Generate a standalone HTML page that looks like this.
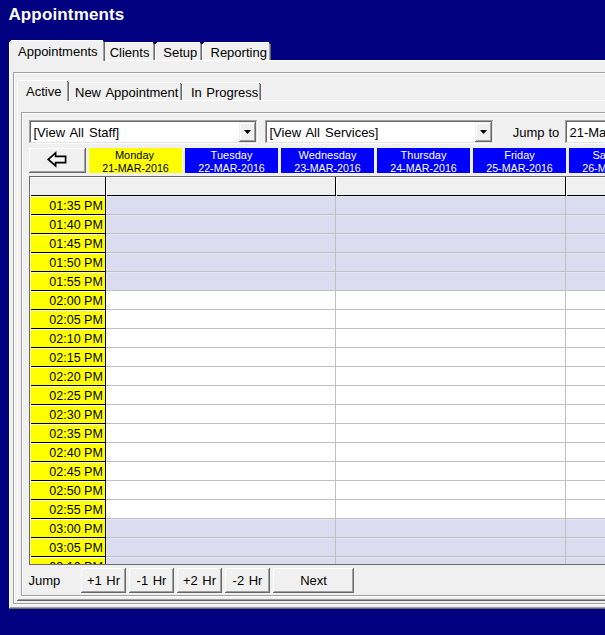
<!DOCTYPE html>
<html><head><meta charset="utf-8"><style>
html,body{margin:0;padding:0;}
body{width:605px;height:635px;overflow:hidden;background:#000080;position:relative;font-family:"Liberation Sans",sans-serif;}
div{position:absolute;}
.t{position:absolute;line-height:1;white-space:pre;}
</style></head><body>
<span class="t" style="left:8.4px;top:5.51px;font-size:17px;color:#fff;font-weight:bold;letter-spacing:0.15px">Appointments</span>
<div style="left:9px;top:60px;width:700px;height:549px;background:#f0f0f0;"></div>
<div style="left:9px;top:60px;width:1px;height:548px;background:#ffffff;"></div>
<div style="left:9px;top:60px;width:596px;height:1px;background:#ffffff;"></div>
<div style="left:10px;top:607px;width:595px;height:1px;background:#a0a0a0;"></div>
<div style="left:9px;top:608px;width:596px;height:1px;background:#696969;"></div>
<div style="left:103px;top:44px;width:52px;height:16px;background:#f0f0f0;"></div>
<div style="left:104px;top:43px;width:50px;height:1px;background:#f0f0f0;"></div>
<div style="left:105px;top:42px;width:48px;height:1px;background:#ffffff;"></div>
<div style="left:104px;top:43px;width:1px;height:1px;background:#ffffff;"></div>
<div style="left:103px;top:44px;width:1px;height:16px;background:#ffffff;"></div>
<div style="left:153px;top:43px;width:1px;height:1px;background:#696969;"></div>
<div style="left:153px;top:44px;width:1px;height:16px;background:#a0a0a0;"></div>
<div style="left:154px;top:44px;width:1px;height:16px;background:#696969;"></div>
<div style="left:155px;top:44px;width:47px;height:16px;background:#f0f0f0;"></div>
<div style="left:156px;top:43px;width:45px;height:1px;background:#f0f0f0;"></div>
<div style="left:157px;top:42px;width:43px;height:1px;background:#ffffff;"></div>
<div style="left:156px;top:43px;width:1px;height:1px;background:#ffffff;"></div>
<div style="left:155px;top:44px;width:1px;height:16px;background:#ffffff;"></div>
<div style="left:200px;top:43px;width:1px;height:1px;background:#696969;"></div>
<div style="left:200px;top:44px;width:1px;height:16px;background:#a0a0a0;"></div>
<div style="left:201px;top:44px;width:1px;height:16px;background:#696969;"></div>
<div style="left:202px;top:44px;width:69px;height:16px;background:#f0f0f0;"></div>
<div style="left:203px;top:43px;width:67px;height:1px;background:#f0f0f0;"></div>
<div style="left:204px;top:42px;width:65px;height:1px;background:#ffffff;"></div>
<div style="left:203px;top:43px;width:1px;height:1px;background:#ffffff;"></div>
<div style="left:202px;top:44px;width:1px;height:16px;background:#ffffff;"></div>
<div style="left:269px;top:43px;width:1px;height:1px;background:#696969;"></div>
<div style="left:269px;top:44px;width:1px;height:16px;background:#a0a0a0;"></div>
<div style="left:270px;top:44px;width:1px;height:16px;background:#696969;"></div>
<div style="left:9px;top:42px;width:96px;height:19px;background:#f0f0f0;"></div>
<div style="left:10px;top:41px;width:94px;height:1px;background:#f0f0f0;"></div>
<div style="left:11px;top:40px;width:92px;height:1px;background:#ffffff;"></div>
<div style="left:10px;top:41px;width:1px;height:1px;background:#ffffff;"></div>
<div style="left:9px;top:42px;width:1px;height:19px;background:#ffffff;"></div>
<div style="left:103px;top:41px;width:1px;height:1px;background:#696969;"></div>
<div style="left:103px;top:42px;width:1px;height:19px;background:#a0a0a0;"></div>
<div style="left:104px;top:42px;width:1px;height:19px;background:#696969;"></div>
<div style="left:10px;top:60px;width:93px;height:1px;background:#f0f0f0;"></div>
<span class="t" style="left:18px;top:44.60px;font-size:13px;color:#000;">Appointments</span>
<span class="t" style="left:109.7px;top:45.60px;font-size:13px;color:#000;">Clients</span>
<span class="t" style="left:163.3px;top:45.60px;font-size:13px;color:#000;">Setup</span>
<span class="t" style="left:210.5px;top:45.60px;font-size:13px;color:#000;">Reporting</span>
<div style="left:13px;top:72px;width:592px;height:1px;background:#a0a0a0;"></div>
<div style="left:13px;top:72px;width:1px;height:532px;background:#a0a0a0;"></div>
<div style="left:14px;top:73px;width:591px;height:1px;background:#ffffff;"></div>
<div style="left:14px;top:73px;width:1px;height:530px;background:#ffffff;"></div>
<div style="left:14px;top:603px;width:591px;height:1px;background:#a0a0a0;"></div>
<div style="left:13px;top:604px;width:592px;height:1px;background:#ffffff;"></div>
<div style="left:17px;top:100px;width:1px;height:500px;background:#ffffff;"></div>
<div style="left:17px;top:100px;width:588px;height:1px;background:#ffffff;"></div>
<div style="left:18px;top:599px;width:587px;height:1px;background:#a0a0a0;"></div>
<div style="left:17px;top:600px;width:588px;height:1px;background:#696969;"></div>
<div style="left:69px;top:84px;width:113px;height:16px;background:#f0f0f0;"></div>
<div style="left:70px;top:83px;width:111px;height:1px;background:#f0f0f0;"></div>
<div style="left:71px;top:82px;width:109px;height:1px;background:#ffffff;"></div>
<div style="left:70px;top:83px;width:1px;height:1px;background:#ffffff;"></div>
<div style="left:69px;top:84px;width:1px;height:16px;background:#ffffff;"></div>
<div style="left:180px;top:83px;width:1px;height:1px;background:#696969;"></div>
<div style="left:180px;top:84px;width:1px;height:16px;background:#a0a0a0;"></div>
<div style="left:181px;top:84px;width:1px;height:16px;background:#696969;"></div>
<div style="left:182px;top:84px;width:79px;height:16px;background:#f0f0f0;"></div>
<div style="left:183px;top:83px;width:77px;height:1px;background:#f0f0f0;"></div>
<div style="left:184px;top:82px;width:75px;height:1px;background:#ffffff;"></div>
<div style="left:183px;top:83px;width:1px;height:1px;background:#ffffff;"></div>
<div style="left:182px;top:84px;width:1px;height:16px;background:#ffffff;"></div>
<div style="left:259px;top:83px;width:1px;height:1px;background:#696969;"></div>
<div style="left:259px;top:84px;width:1px;height:16px;background:#a0a0a0;"></div>
<div style="left:260px;top:84px;width:1px;height:16px;background:#696969;"></div>
<div style="left:17px;top:82px;width:52px;height:19px;background:#f0f0f0;"></div>
<div style="left:18px;top:81px;width:50px;height:1px;background:#f0f0f0;"></div>
<div style="left:19px;top:80px;width:48px;height:1px;background:#ffffff;"></div>
<div style="left:18px;top:81px;width:1px;height:1px;background:#ffffff;"></div>
<div style="left:17px;top:82px;width:1px;height:19px;background:#ffffff;"></div>
<div style="left:67px;top:81px;width:1px;height:1px;background:#696969;"></div>
<div style="left:67px;top:82px;width:1px;height:19px;background:#a0a0a0;"></div>
<div style="left:68px;top:82px;width:1px;height:19px;background:#696969;"></div>
<div style="left:18px;top:100px;width:49px;height:1px;background:#f0f0f0;"></div>
<span class="t" style="left:26px;top:84.60px;font-size:13px;color:#000;">Active</span>
<span class="t" style="left:75.0px;top:85.60px;font-size:13px;color:#000;word-spacing:1.5px">New Appointment</span>
<span class="t" style="left:191.0px;top:85.60px;font-size:13px;color:#000;word-spacing:0.8px">In Progress</span>
<div style="left:21px;top:112px;width:584px;height:1px;background:#a0a0a0;"></div>
<div style="left:21px;top:112px;width:1px;height:484px;background:#a0a0a0;"></div>
<div style="left:22px;top:113px;width:583px;height:1px;background:#ffffff;"></div>
<div style="left:22px;top:113px;width:1px;height:482px;background:#ffffff;"></div>
<div style="left:22px;top:595px;width:583px;height:1px;background:#a0a0a0;"></div>
<div style="left:21px;top:596px;width:584px;height:1px;background:#ffffff;"></div>
<div style="left:29px;top:120px;width:229px;height:24px;background:#ffffff;"></div>
<div style="left:29px;top:120px;width:228px;height:1px;background:#a0a0a0;"></div>
<div style="left:29px;top:120px;width:1px;height:23px;background:#a0a0a0;"></div>
<div style="left:30px;top:121px;width:226px;height:1px;background:#696969;"></div>
<div style="left:30px;top:121px;width:1px;height:21px;background:#696969;"></div>
<div style="left:30px;top:142px;width:227px;height:1px;background:#e3e3e3;"></div>
<div style="left:256px;top:121px;width:1px;height:22px;background:#e3e3e3;"></div>
<div style="left:29px;top:143px;width:229px;height:1px;background:#ffffff;"></div>
<div style="left:257px;top:120px;width:1px;height:24px;background:#ffffff;"></div>
<div style="left:239px;top:122px;width:17px;height:20px;background:#f0f0f0;"></div>
<div style="left:239px;top:122px;width:16px;height:1px;background:#f0f0f0;"></div>
<div style="left:239px;top:122px;width:1px;height:19px;background:#f0f0f0;"></div>
<div style="left:240px;top:123px;width:14px;height:1px;background:#ffffff;"></div>
<div style="left:240px;top:123px;width:1px;height:17px;background:#ffffff;"></div>
<div style="left:240px;top:140px;width:15px;height:1px;background:#a0a0a0;"></div>
<div style="left:254px;top:123px;width:1px;height:18px;background:#a0a0a0;"></div>
<div style="left:239px;top:141px;width:17px;height:1px;background:#696969;"></div>
<div style="left:255px;top:122px;width:1px;height:20px;background:#696969;"></div>
<svg style="position:absolute;left:244px;top:130px" width="7" height="4"><path d="M0 0H7L3.5 4Z" fill="#000"/></svg>
<span class="t" style="left:33.5px;top:125.80px;font-size:13px;color:#000;word-spacing:1.5px">[View All Staff]</span>
<div style="left:265px;top:120px;width:229px;height:24px;background:#ffffff;"></div>
<div style="left:265px;top:120px;width:228px;height:1px;background:#a0a0a0;"></div>
<div style="left:265px;top:120px;width:1px;height:23px;background:#a0a0a0;"></div>
<div style="left:266px;top:121px;width:226px;height:1px;background:#696969;"></div>
<div style="left:266px;top:121px;width:1px;height:21px;background:#696969;"></div>
<div style="left:266px;top:142px;width:227px;height:1px;background:#e3e3e3;"></div>
<div style="left:492px;top:121px;width:1px;height:22px;background:#e3e3e3;"></div>
<div style="left:265px;top:143px;width:229px;height:1px;background:#ffffff;"></div>
<div style="left:493px;top:120px;width:1px;height:24px;background:#ffffff;"></div>
<div style="left:475px;top:122px;width:17px;height:20px;background:#f0f0f0;"></div>
<div style="left:475px;top:122px;width:16px;height:1px;background:#f0f0f0;"></div>
<div style="left:475px;top:122px;width:1px;height:19px;background:#f0f0f0;"></div>
<div style="left:476px;top:123px;width:14px;height:1px;background:#ffffff;"></div>
<div style="left:476px;top:123px;width:1px;height:17px;background:#ffffff;"></div>
<div style="left:476px;top:140px;width:15px;height:1px;background:#a0a0a0;"></div>
<div style="left:490px;top:123px;width:1px;height:18px;background:#a0a0a0;"></div>
<div style="left:475px;top:141px;width:17px;height:1px;background:#696969;"></div>
<div style="left:491px;top:122px;width:1px;height:20px;background:#696969;"></div>
<svg style="position:absolute;left:480px;top:130px" width="7" height="4"><path d="M0 0H7L3.5 4Z" fill="#000"/></svg>
<span class="t" style="left:269.5px;top:125.80px;font-size:13px;color:#000;word-spacing:1.5px">[View All Services]</span>
<span class="t" style="left:512.8px;top:125.50px;font-size:13px;color:#000;word-spacing:0.3px">Jump to</span>
<div style="left:565px;top:120px;width:136px;height:24px;background:#ffffff;"></div>
<div style="left:565px;top:120px;width:135px;height:1px;background:#a0a0a0;"></div>
<div style="left:565px;top:120px;width:1px;height:23px;background:#a0a0a0;"></div>
<div style="left:566px;top:121px;width:133px;height:1px;background:#696969;"></div>
<div style="left:566px;top:121px;width:1px;height:21px;background:#696969;"></div>
<div style="left:566px;top:142px;width:134px;height:1px;background:#e3e3e3;"></div>
<div style="left:699px;top:121px;width:1px;height:22px;background:#e3e3e3;"></div>
<div style="left:565px;top:143px;width:136px;height:1px;background:#ffffff;"></div>
<div style="left:700px;top:120px;width:1px;height:24px;background:#ffffff;"></div>
<span class="t" style="left:569.5px;top:125.80px;font-size:13px;color:#000;">21-Mar-2016</span>
<div style="left:29px;top:148px;width:57px;height:25px;background:#f0f0f0;"></div>
<div style="left:29px;top:148px;width:56px;height:1px;background:#ffffff;"></div>
<div style="left:29px;top:148px;width:1px;height:24px;background:#ffffff;"></div>
<div style="left:30px;top:149px;width:54px;height:1px;background:#f0f0f0;"></div>
<div style="left:30px;top:149px;width:1px;height:22px;background:#f0f0f0;"></div>
<div style="left:30px;top:171px;width:55px;height:1px;background:#a0a0a0;"></div>
<div style="left:84px;top:149px;width:1px;height:23px;background:#a0a0a0;"></div>
<div style="left:29px;top:172px;width:57px;height:1px;background:#696969;"></div>
<div style="left:85px;top:148px;width:1px;height:25px;background:#696969;"></div>
<svg style="position:absolute;left:44px;top:148px" width="26" height="24"><path d="M4.3 11.4L11.6 4.9V8.3H21.6V14.6H11.6V17.9Z" fill="#f4f4f4" stroke="#000" stroke-width="1.7" stroke-linejoin="miter"/></svg>
<div style="left:89px;top:148px;width:93px;height:25px;background:#ffff00;"></div>
<span class="t" style="left:34.50px;width:200px;text-align:center;top:149.59px;font-size:11px;color:#000;">Monday</span>
<span class="t" style="left:35.50px;width:200px;text-align:center;top:163.34px;font-size:10.7px;color:#000;">21-MAR-2016</span>
<div style="left:185px;top:148px;width:93px;height:25px;background:#0000ff;"></div>
<span class="t" style="left:131.50px;width:200px;text-align:center;top:149.59px;font-size:11px;color:#fff;">Tuesday</span>
<span class="t" style="left:131.50px;width:200px;text-align:center;top:163.34px;font-size:10.7px;color:#fff;">22-MAR-2016</span>
<div style="left:281px;top:148px;width:93px;height:25px;background:#0000ff;"></div>
<span class="t" style="left:227.50px;width:200px;text-align:center;top:149.59px;font-size:11px;color:#fff;">Wednesday</span>
<span class="t" style="left:227.50px;width:200px;text-align:center;top:163.34px;font-size:10.7px;color:#fff;">23-MAR-2016</span>
<div style="left:377px;top:148px;width:93px;height:25px;background:#0000ff;"></div>
<span class="t" style="left:323.50px;width:200px;text-align:center;top:149.59px;font-size:11px;color:#fff;">Thursday</span>
<span class="t" style="left:323.50px;width:200px;text-align:center;top:163.34px;font-size:10.7px;color:#fff;">24-MAR-2016</span>
<div style="left:473px;top:148px;width:93px;height:25px;background:#0000ff;"></div>
<span class="t" style="left:419.50px;width:200px;text-align:center;top:149.59px;font-size:11px;color:#fff;">Friday</span>
<span class="t" style="left:419.50px;width:200px;text-align:center;top:163.34px;font-size:10.7px;color:#fff;">25-MAR-2016</span>
<div style="left:569px;top:148px;width:93px;height:25px;background:#0000ff;"></div>
<span class="t" style="left:514.50px;width:200px;text-align:center;top:149.59px;font-size:11px;color:#fff;">Saturday</span>
<span class="t" style="left:515.50px;width:200px;text-align:center;top:163.34px;font-size:10.7px;color:#fff;">26-MAR-2016</span>
<div style="left:29px;top:176px;width:700px;height:389px;background:#ffffff;"></div>
<div style="left:29px;top:176px;width:1px;height:389px;background:#696969;"></div>
<div style="left:29px;top:176px;width:576px;height:1px;background:#696969;"></div>
<div style="left:29px;top:564px;width:576px;height:1px;background:#696969;"></div>
<div style="left:30px;top:177px;width:600px;height:387px;overflow:hidden">
<div style="left:0px;top:0px;width:700px;height:18px;background:#f0f0f0;"></div>
<div style="left:0px;top:0px;width:575px;height:1px;background:#ffffff;"></div>
<div style="left:0px;top:0px;width:1px;height:18px;background:#ffffff;"></div>
<div style="left:75px;top:0px;width:1px;height:387px;background:#000;"></div>
<div style="left:1px;top:18px;width:74px;height:1px;background:#000;"></div>
<div style="left:0px;top:18px;width:1px;height:1px;background:#ffffff;"></div>
<div style="left:76px;top:1px;width:1px;height:18px;background:#ffffff;"></div>
<div style="left:305px;top:0px;width:1px;height:19px;background:#000;"></div>
<div style="left:77px;top:18px;width:229px;height:1px;background:#000;"></div>
<div style="left:306px;top:1px;width:1px;height:18px;background:#ffffff;"></div>
<div style="left:535px;top:0px;width:1px;height:19px;background:#000;"></div>
<div style="left:307px;top:18px;width:229px;height:1px;background:#000;"></div>
<div style="left:536px;top:1px;width:1px;height:18px;background:#ffffff;"></div>
<div style="left:537px;top:18px;width:38px;height:1px;background:#000;"></div>
<div style="left:0px;top:19px;width:75px;height:18px;background:#ffff00;"></div>
<div style="left:1px;top:19px;width:74px;height:1px;background:#ffffff;"></div>
<div style="left:0px;top:19px;width:1px;height:18px;background:#ffffa0;"></div>
<div style="left:1px;top:37px;width:74px;height:1px;background:#000;"></div>
<div style="left:0px;top:37px;width:1px;height:1px;background:#ffffff;"></div>
<div style="left:76px;top:19px;width:700px;height:18px;background:#dcdcf0;"></div>
<div style="left:76px;top:19px;width:499px;height:1px;background:#e6e6f6;"></div>
<div style="left:76px;top:19px;width:1px;height:18px;background:#e6e6f6;"></div>
<div style="left:76px;top:37px;width:499px;height:1px;background:#c0c0c0;"></div>
<span class="t" style="left:-127.20px;width:200px;text-align:right;top:23.42px;font-size:12.5px">01:35 PM</span>
<div style="left:0px;top:38px;width:75px;height:18px;background:#ffff00;"></div>
<div style="left:1px;top:38px;width:74px;height:1px;background:#ffffff;"></div>
<div style="left:0px;top:38px;width:1px;height:18px;background:#ffffa0;"></div>
<div style="left:1px;top:56px;width:74px;height:1px;background:#000;"></div>
<div style="left:0px;top:56px;width:1px;height:1px;background:#ffffff;"></div>
<div style="left:76px;top:38px;width:700px;height:18px;background:#dcdcf0;"></div>
<div style="left:76px;top:38px;width:499px;height:1px;background:#e6e6f6;"></div>
<div style="left:76px;top:38px;width:1px;height:18px;background:#e6e6f6;"></div>
<div style="left:76px;top:56px;width:499px;height:1px;background:#c0c0c0;"></div>
<span class="t" style="left:-127.20px;width:200px;text-align:right;top:42.42px;font-size:12.5px">01:40 PM</span>
<div style="left:0px;top:57px;width:75px;height:18px;background:#ffff00;"></div>
<div style="left:1px;top:57px;width:74px;height:1px;background:#ffffff;"></div>
<div style="left:0px;top:57px;width:1px;height:18px;background:#ffffa0;"></div>
<div style="left:1px;top:75px;width:74px;height:1px;background:#000;"></div>
<div style="left:0px;top:75px;width:1px;height:1px;background:#ffffff;"></div>
<div style="left:76px;top:57px;width:700px;height:18px;background:#dcdcf0;"></div>
<div style="left:76px;top:57px;width:499px;height:1px;background:#e6e6f6;"></div>
<div style="left:76px;top:57px;width:1px;height:18px;background:#e6e6f6;"></div>
<div style="left:76px;top:75px;width:499px;height:1px;background:#c0c0c0;"></div>
<span class="t" style="left:-127.20px;width:200px;text-align:right;top:61.42px;font-size:12.5px">01:45 PM</span>
<div style="left:0px;top:76px;width:75px;height:18px;background:#ffff00;"></div>
<div style="left:1px;top:76px;width:74px;height:1px;background:#ffffff;"></div>
<div style="left:0px;top:76px;width:1px;height:18px;background:#ffffa0;"></div>
<div style="left:1px;top:94px;width:74px;height:1px;background:#000;"></div>
<div style="left:0px;top:94px;width:1px;height:1px;background:#ffffff;"></div>
<div style="left:76px;top:76px;width:700px;height:18px;background:#dcdcf0;"></div>
<div style="left:76px;top:76px;width:499px;height:1px;background:#e6e6f6;"></div>
<div style="left:76px;top:76px;width:1px;height:18px;background:#e6e6f6;"></div>
<div style="left:76px;top:94px;width:499px;height:1px;background:#c0c0c0;"></div>
<span class="t" style="left:-127.20px;width:200px;text-align:right;top:80.42px;font-size:12.5px">01:50 PM</span>
<div style="left:0px;top:95px;width:75px;height:18px;background:#ffff00;"></div>
<div style="left:1px;top:95px;width:74px;height:1px;background:#ffffff;"></div>
<div style="left:0px;top:95px;width:1px;height:18px;background:#ffffa0;"></div>
<div style="left:1px;top:113px;width:74px;height:1px;background:#000;"></div>
<div style="left:0px;top:113px;width:1px;height:1px;background:#ffffff;"></div>
<div style="left:76px;top:95px;width:700px;height:18px;background:#dcdcf0;"></div>
<div style="left:76px;top:95px;width:499px;height:1px;background:#e6e6f6;"></div>
<div style="left:76px;top:95px;width:1px;height:18px;background:#e6e6f6;"></div>
<div style="left:76px;top:113px;width:499px;height:1px;background:#c0c0c0;"></div>
<span class="t" style="left:-127.20px;width:200px;text-align:right;top:99.42px;font-size:12.5px">01:55 PM</span>
<div style="left:0px;top:114px;width:75px;height:18px;background:#ffff00;"></div>
<div style="left:1px;top:114px;width:74px;height:1px;background:#ffffff;"></div>
<div style="left:0px;top:114px;width:1px;height:18px;background:#ffffa0;"></div>
<div style="left:1px;top:132px;width:74px;height:1px;background:#000;"></div>
<div style="left:0px;top:132px;width:1px;height:1px;background:#ffffff;"></div>
<div style="left:76px;top:114px;width:700px;height:18px;background:#ffffff;"></div>
<div style="left:76px;top:132px;width:499px;height:1px;background:#c0c0c0;"></div>
<span class="t" style="left:-127.20px;width:200px;text-align:right;top:118.42px;font-size:12.5px">02:00 PM</span>
<div style="left:0px;top:133px;width:75px;height:18px;background:#ffff00;"></div>
<div style="left:1px;top:133px;width:74px;height:1px;background:#ffffff;"></div>
<div style="left:0px;top:133px;width:1px;height:18px;background:#ffffa0;"></div>
<div style="left:1px;top:151px;width:74px;height:1px;background:#000;"></div>
<div style="left:0px;top:151px;width:1px;height:1px;background:#ffffff;"></div>
<div style="left:76px;top:133px;width:700px;height:18px;background:#ffffff;"></div>
<div style="left:76px;top:151px;width:499px;height:1px;background:#c0c0c0;"></div>
<span class="t" style="left:-127.20px;width:200px;text-align:right;top:137.42px;font-size:12.5px">02:05 PM</span>
<div style="left:0px;top:152px;width:75px;height:18px;background:#ffff00;"></div>
<div style="left:1px;top:152px;width:74px;height:1px;background:#ffffff;"></div>
<div style="left:0px;top:152px;width:1px;height:18px;background:#ffffa0;"></div>
<div style="left:1px;top:170px;width:74px;height:1px;background:#000;"></div>
<div style="left:0px;top:170px;width:1px;height:1px;background:#ffffff;"></div>
<div style="left:76px;top:152px;width:700px;height:18px;background:#ffffff;"></div>
<div style="left:76px;top:170px;width:499px;height:1px;background:#c0c0c0;"></div>
<span class="t" style="left:-127.20px;width:200px;text-align:right;top:156.42px;font-size:12.5px">02:10 PM</span>
<div style="left:0px;top:171px;width:75px;height:18px;background:#ffff00;"></div>
<div style="left:1px;top:171px;width:74px;height:1px;background:#ffffff;"></div>
<div style="left:0px;top:171px;width:1px;height:18px;background:#ffffa0;"></div>
<div style="left:1px;top:189px;width:74px;height:1px;background:#000;"></div>
<div style="left:0px;top:189px;width:1px;height:1px;background:#ffffff;"></div>
<div style="left:76px;top:171px;width:700px;height:18px;background:#ffffff;"></div>
<div style="left:76px;top:189px;width:499px;height:1px;background:#c0c0c0;"></div>
<span class="t" style="left:-127.20px;width:200px;text-align:right;top:175.42px;font-size:12.5px">02:15 PM</span>
<div style="left:0px;top:190px;width:75px;height:18px;background:#ffff00;"></div>
<div style="left:1px;top:190px;width:74px;height:1px;background:#ffffff;"></div>
<div style="left:0px;top:190px;width:1px;height:18px;background:#ffffa0;"></div>
<div style="left:1px;top:208px;width:74px;height:1px;background:#000;"></div>
<div style="left:0px;top:208px;width:1px;height:1px;background:#ffffff;"></div>
<div style="left:76px;top:190px;width:700px;height:18px;background:#ffffff;"></div>
<div style="left:76px;top:208px;width:499px;height:1px;background:#c0c0c0;"></div>
<span class="t" style="left:-127.20px;width:200px;text-align:right;top:194.42px;font-size:12.5px">02:20 PM</span>
<div style="left:0px;top:209px;width:75px;height:18px;background:#ffff00;"></div>
<div style="left:1px;top:209px;width:74px;height:1px;background:#ffffff;"></div>
<div style="left:0px;top:209px;width:1px;height:18px;background:#ffffa0;"></div>
<div style="left:1px;top:227px;width:74px;height:1px;background:#000;"></div>
<div style="left:0px;top:227px;width:1px;height:1px;background:#ffffff;"></div>
<div style="left:76px;top:209px;width:700px;height:18px;background:#ffffff;"></div>
<div style="left:76px;top:227px;width:499px;height:1px;background:#c0c0c0;"></div>
<span class="t" style="left:-127.20px;width:200px;text-align:right;top:213.42px;font-size:12.5px">02:25 PM</span>
<div style="left:0px;top:228px;width:75px;height:18px;background:#ffff00;"></div>
<div style="left:1px;top:228px;width:74px;height:1px;background:#ffffff;"></div>
<div style="left:0px;top:228px;width:1px;height:18px;background:#ffffa0;"></div>
<div style="left:1px;top:246px;width:74px;height:1px;background:#000;"></div>
<div style="left:0px;top:246px;width:1px;height:1px;background:#ffffff;"></div>
<div style="left:76px;top:228px;width:700px;height:18px;background:#ffffff;"></div>
<div style="left:76px;top:246px;width:499px;height:1px;background:#c0c0c0;"></div>
<span class="t" style="left:-127.20px;width:200px;text-align:right;top:232.42px;font-size:12.5px">02:30 PM</span>
<div style="left:0px;top:247px;width:75px;height:18px;background:#ffff00;"></div>
<div style="left:1px;top:247px;width:74px;height:1px;background:#ffffff;"></div>
<div style="left:0px;top:247px;width:1px;height:18px;background:#ffffa0;"></div>
<div style="left:1px;top:265px;width:74px;height:1px;background:#000;"></div>
<div style="left:0px;top:265px;width:1px;height:1px;background:#ffffff;"></div>
<div style="left:76px;top:247px;width:700px;height:18px;background:#ffffff;"></div>
<div style="left:76px;top:265px;width:499px;height:1px;background:#c0c0c0;"></div>
<span class="t" style="left:-127.20px;width:200px;text-align:right;top:251.42px;font-size:12.5px">02:35 PM</span>
<div style="left:0px;top:266px;width:75px;height:18px;background:#ffff00;"></div>
<div style="left:1px;top:266px;width:74px;height:1px;background:#ffffff;"></div>
<div style="left:0px;top:266px;width:1px;height:18px;background:#ffffa0;"></div>
<div style="left:1px;top:284px;width:74px;height:1px;background:#000;"></div>
<div style="left:0px;top:284px;width:1px;height:1px;background:#ffffff;"></div>
<div style="left:76px;top:266px;width:700px;height:18px;background:#ffffff;"></div>
<div style="left:76px;top:284px;width:499px;height:1px;background:#c0c0c0;"></div>
<span class="t" style="left:-127.20px;width:200px;text-align:right;top:270.42px;font-size:12.5px">02:40 PM</span>
<div style="left:0px;top:285px;width:75px;height:18px;background:#ffff00;"></div>
<div style="left:1px;top:285px;width:74px;height:1px;background:#ffffff;"></div>
<div style="left:0px;top:285px;width:1px;height:18px;background:#ffffa0;"></div>
<div style="left:1px;top:303px;width:74px;height:1px;background:#000;"></div>
<div style="left:0px;top:303px;width:1px;height:1px;background:#ffffff;"></div>
<div style="left:76px;top:285px;width:700px;height:18px;background:#ffffff;"></div>
<div style="left:76px;top:303px;width:499px;height:1px;background:#c0c0c0;"></div>
<span class="t" style="left:-127.20px;width:200px;text-align:right;top:289.42px;font-size:12.5px">02:45 PM</span>
<div style="left:0px;top:304px;width:75px;height:18px;background:#ffff00;"></div>
<div style="left:1px;top:304px;width:74px;height:1px;background:#ffffff;"></div>
<div style="left:0px;top:304px;width:1px;height:18px;background:#ffffa0;"></div>
<div style="left:1px;top:322px;width:74px;height:1px;background:#000;"></div>
<div style="left:0px;top:322px;width:1px;height:1px;background:#ffffff;"></div>
<div style="left:76px;top:304px;width:700px;height:18px;background:#ffffff;"></div>
<div style="left:76px;top:322px;width:499px;height:1px;background:#c0c0c0;"></div>
<span class="t" style="left:-127.20px;width:200px;text-align:right;top:308.42px;font-size:12.5px">02:50 PM</span>
<div style="left:0px;top:323px;width:75px;height:18px;background:#ffff00;"></div>
<div style="left:1px;top:323px;width:74px;height:1px;background:#ffffff;"></div>
<div style="left:0px;top:323px;width:1px;height:18px;background:#ffffa0;"></div>
<div style="left:1px;top:341px;width:74px;height:1px;background:#000;"></div>
<div style="left:0px;top:341px;width:1px;height:1px;background:#ffffff;"></div>
<div style="left:76px;top:323px;width:700px;height:18px;background:#ffffff;"></div>
<div style="left:76px;top:341px;width:499px;height:1px;background:#c0c0c0;"></div>
<span class="t" style="left:-127.20px;width:200px;text-align:right;top:327.42px;font-size:12.5px">02:55 PM</span>
<div style="left:0px;top:342px;width:75px;height:18px;background:#ffff00;"></div>
<div style="left:1px;top:342px;width:74px;height:1px;background:#ffffff;"></div>
<div style="left:0px;top:342px;width:1px;height:18px;background:#ffffa0;"></div>
<div style="left:1px;top:360px;width:74px;height:1px;background:#000;"></div>
<div style="left:0px;top:360px;width:1px;height:1px;background:#ffffff;"></div>
<div style="left:76px;top:342px;width:700px;height:18px;background:#dcdcf0;"></div>
<div style="left:76px;top:342px;width:499px;height:1px;background:#e6e6f6;"></div>
<div style="left:76px;top:342px;width:1px;height:18px;background:#e6e6f6;"></div>
<div style="left:76px;top:360px;width:499px;height:1px;background:#c0c0c0;"></div>
<span class="t" style="left:-127.20px;width:200px;text-align:right;top:346.42px;font-size:12.5px">03:00 PM</span>
<div style="left:0px;top:361px;width:75px;height:18px;background:#ffff00;"></div>
<div style="left:1px;top:361px;width:74px;height:1px;background:#ffffff;"></div>
<div style="left:0px;top:361px;width:1px;height:18px;background:#ffffa0;"></div>
<div style="left:1px;top:379px;width:74px;height:1px;background:#000;"></div>
<div style="left:0px;top:379px;width:1px;height:1px;background:#ffffff;"></div>
<div style="left:76px;top:361px;width:700px;height:18px;background:#dcdcf0;"></div>
<div style="left:76px;top:361px;width:499px;height:1px;background:#e6e6f6;"></div>
<div style="left:76px;top:361px;width:1px;height:18px;background:#e6e6f6;"></div>
<div style="left:76px;top:379px;width:499px;height:1px;background:#c0c0c0;"></div>
<span class="t" style="left:-127.20px;width:200px;text-align:right;top:365.42px;font-size:12.5px">03:05 PM</span>
<div style="left:0px;top:380px;width:75px;height:18px;background:#ffff00;"></div>
<div style="left:1px;top:380px;width:74px;height:1px;background:#ffffff;"></div>
<div style="left:0px;top:380px;width:1px;height:18px;background:#ffffa0;"></div>
<div style="left:1px;top:398px;width:74px;height:1px;background:#000;"></div>
<div style="left:0px;top:398px;width:1px;height:1px;background:#ffffff;"></div>
<div style="left:76px;top:380px;width:700px;height:18px;background:#dcdcf0;"></div>
<div style="left:76px;top:380px;width:499px;height:1px;background:#e6e6f6;"></div>
<div style="left:76px;top:380px;width:1px;height:18px;background:#e6e6f6;"></div>
<div style="left:76px;top:398px;width:499px;height:1px;background:#c0c0c0;"></div>
<span class="t" style="left:-127.20px;width:200px;text-align:right;top:384.42px;font-size:12.5px">03:10 PM</span>
<div style="left:305px;top:19px;width:1px;height:368px;background:#c0c0c0;"></div>
<div style="left:535px;top:19px;width:1px;height:368px;background:#c0c0c0;"></div>
</div>
<span class="t" style="left:28.5px;top:574.00px;font-size:13px;color:#000;">Jump</span>
<div style="left:81px;top:568px;width:45px;height:25px;background:#f0f0f0;"></div>
<div style="left:81px;top:568px;width:44px;height:1px;background:#ffffff;"></div>
<div style="left:81px;top:568px;width:1px;height:24px;background:#ffffff;"></div>
<div style="left:82px;top:569px;width:42px;height:1px;background:#f0f0f0;"></div>
<div style="left:82px;top:569px;width:1px;height:22px;background:#f0f0f0;"></div>
<div style="left:82px;top:591px;width:43px;height:1px;background:#a0a0a0;"></div>
<div style="left:124px;top:569px;width:1px;height:23px;background:#a0a0a0;"></div>
<div style="left:81px;top:592px;width:45px;height:1px;background:#696969;"></div>
<div style="left:125px;top:568px;width:1px;height:25px;background:#696969;"></div>
<span class="t" style="left:3.50px;width:200px;text-align:center;top:573.80px;font-size:13px;color:#000;word-spacing:1px">+1 Hr</span>
<div style="left:129px;top:568px;width:45px;height:25px;background:#f0f0f0;"></div>
<div style="left:129px;top:568px;width:44px;height:1px;background:#ffffff;"></div>
<div style="left:129px;top:568px;width:1px;height:24px;background:#ffffff;"></div>
<div style="left:130px;top:569px;width:42px;height:1px;background:#f0f0f0;"></div>
<div style="left:130px;top:569px;width:1px;height:22px;background:#f0f0f0;"></div>
<div style="left:130px;top:591px;width:43px;height:1px;background:#a0a0a0;"></div>
<div style="left:172px;top:569px;width:1px;height:23px;background:#a0a0a0;"></div>
<div style="left:129px;top:592px;width:45px;height:1px;background:#696969;"></div>
<div style="left:173px;top:568px;width:1px;height:25px;background:#696969;"></div>
<span class="t" style="left:51.50px;width:200px;text-align:center;top:573.80px;font-size:13px;color:#000;word-spacing:1px">-1 Hr</span>
<div style="left:177px;top:568px;width:45px;height:25px;background:#f0f0f0;"></div>
<div style="left:177px;top:568px;width:44px;height:1px;background:#ffffff;"></div>
<div style="left:177px;top:568px;width:1px;height:24px;background:#ffffff;"></div>
<div style="left:178px;top:569px;width:42px;height:1px;background:#f0f0f0;"></div>
<div style="left:178px;top:569px;width:1px;height:22px;background:#f0f0f0;"></div>
<div style="left:178px;top:591px;width:43px;height:1px;background:#a0a0a0;"></div>
<div style="left:220px;top:569px;width:1px;height:23px;background:#a0a0a0;"></div>
<div style="left:177px;top:592px;width:45px;height:1px;background:#696969;"></div>
<div style="left:221px;top:568px;width:1px;height:25px;background:#696969;"></div>
<span class="t" style="left:99.50px;width:200px;text-align:center;top:573.80px;font-size:13px;color:#000;word-spacing:1px">+2 Hr</span>
<div style="left:225px;top:568px;width:45px;height:25px;background:#f0f0f0;"></div>
<div style="left:225px;top:568px;width:44px;height:1px;background:#ffffff;"></div>
<div style="left:225px;top:568px;width:1px;height:24px;background:#ffffff;"></div>
<div style="left:226px;top:569px;width:42px;height:1px;background:#f0f0f0;"></div>
<div style="left:226px;top:569px;width:1px;height:22px;background:#f0f0f0;"></div>
<div style="left:226px;top:591px;width:43px;height:1px;background:#a0a0a0;"></div>
<div style="left:268px;top:569px;width:1px;height:23px;background:#a0a0a0;"></div>
<div style="left:225px;top:592px;width:45px;height:1px;background:#696969;"></div>
<div style="left:269px;top:568px;width:1px;height:25px;background:#696969;"></div>
<span class="t" style="left:147.50px;width:200px;text-align:center;top:573.80px;font-size:13px;color:#000;word-spacing:1px">-2 Hr</span>
<div style="left:273px;top:568px;width:81px;height:25px;background:#f0f0f0;"></div>
<div style="left:273px;top:568px;width:80px;height:1px;background:#ffffff;"></div>
<div style="left:273px;top:568px;width:1px;height:24px;background:#ffffff;"></div>
<div style="left:274px;top:569px;width:78px;height:1px;background:#f0f0f0;"></div>
<div style="left:274px;top:569px;width:1px;height:22px;background:#f0f0f0;"></div>
<div style="left:274px;top:591px;width:79px;height:1px;background:#a0a0a0;"></div>
<div style="left:352px;top:569px;width:1px;height:23px;background:#a0a0a0;"></div>
<div style="left:273px;top:592px;width:81px;height:1px;background:#696969;"></div>
<div style="left:353px;top:568px;width:1px;height:25px;background:#696969;"></div>
<span class="t" style="left:213.50px;width:200px;text-align:center;top:573.80px;font-size:13px;color:#000;word-spacing:1px">Next</span>
</body></html>
